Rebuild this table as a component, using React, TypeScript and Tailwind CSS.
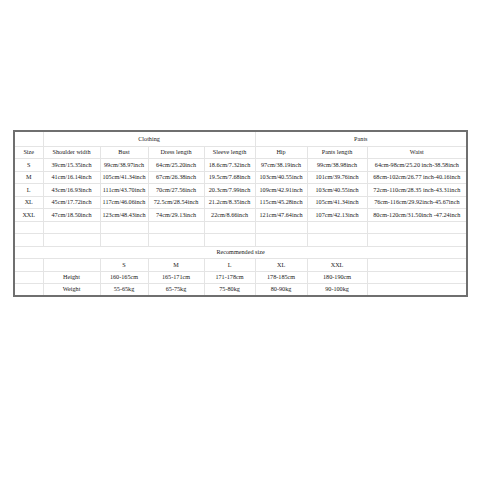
import React from 'react';

const cols = [29, 57, 48, 56, 51, 52, 60, 100];

const clothing = [
  ['S', '39cm/15.35inch', '99cm/38.97inch', '64cm/25.20inch', '18.6cm/7.32inch', '97cm/38.19inch', '99cm/38.98inch', '64cm-98cm/25.20 inch-38.58inch'],
  ['M', '41cm/16.14inch', '105cm/41.34inch', '67cm/26.38inch', '19.5cm/7.68inch', '103cm/40.55inch', '101cm/39.76inch', '68cm-102cm/26.77 inch-40.16inch'],
  ['L', '43cm/16.93inch', '111cm/43.70inch', '70cm/27.56inch', '20.3cm/7.99inch', '109cm/42.91inch', '103cm/40.55inch', '72cm-110cm/28.35 inch-43.31inch'],
  ['XL', '45cm/17.72inch', '117cm/46.06inch', '72.5cm/28.54inch', '21.2cm/8.35inch', '115cm/45.28inch', '105cm/41.34inch', '76cm-116cm/29.92inch-45.67inch'],
  ['XXL', '47cm/18.50inch', '123cm/48.43inch', '74cm/29.13inch', '22cm/8.66inch', '121cm/47.64inch', '107cm/42.13inch', '80cm-120cm/31.50inch -47.24inch'],
];

const recommended = [
  ['', '', 'S', 'M', 'L', 'XL', 'XXL', ''],
  ['', 'Height', '160-165cm', '165-171cm', '171-178cm', '178-185cm', '180-190cm', ''],
  ['', 'Weight', '55-65kg', '65-75kg', '75-80kg', '80-90kg', '90-100kg', ''],
];

const cell = 'border border-[#e4e4e4] text-center align-middle whitespace-nowrap overflow-hidden p-0';

const Row: React.FC<{ values: string[] }> = ({ values }) => (
  <tr className="h-[12.5px]">
    {values.map((v, i) => (
      <td key={i} className={cell}>
        {v}
      </td>
    ))}
  </tr>
);

const App: React.FC = () => {
  const blank = ['', '', '', '', '', '', '', ''];
  return (
    <div className="w-[480px] h-[480px] bg-white pt-[130px] pl-[13px]">
      <table
        className="table-fixed border-collapse border-2 border-[#6f6f6f] w-[453px] text-[6.2px] leading-none text-[#1a1a1a]"
        style={{ fontFamily: '"Liberation Serif", "Noto Sans CJK SC", serif' }}
      >
        <colgroup>
          {cols.map((w, i) => (
            <col key={i} style={{ width: w }} />
          ))}
        </colgroup>
        <tbody>
          <tr className="h-[15px]">
            <td className={cell}></td>
            <td className={cell} colSpan={4}>
              Clothing
            </td>
            <td className={cell} colSpan={3}>
              Pants
            </td>
          </tr>
          <Row values={['Size', 'Shoulder width', 'Bust', 'Dress length', 'Sleeve length', 'Hip', 'Pants length', 'Waist']} />
          {clothing.map((r) => (
            <Row key={r[0]} values={r} />
          ))}
          <Row values={blank} />
          <Row values={blank} />
          <tr className="h-[12.5px]">
            <td className={cell} colSpan={8}>
              Recommended size
            </td>
          </tr>
          {recommended.map((r, i) => (
            <Row key={i} values={r} />
          ))}
        </tbody>
      </table>
    </div>
  );
};

export default App;
